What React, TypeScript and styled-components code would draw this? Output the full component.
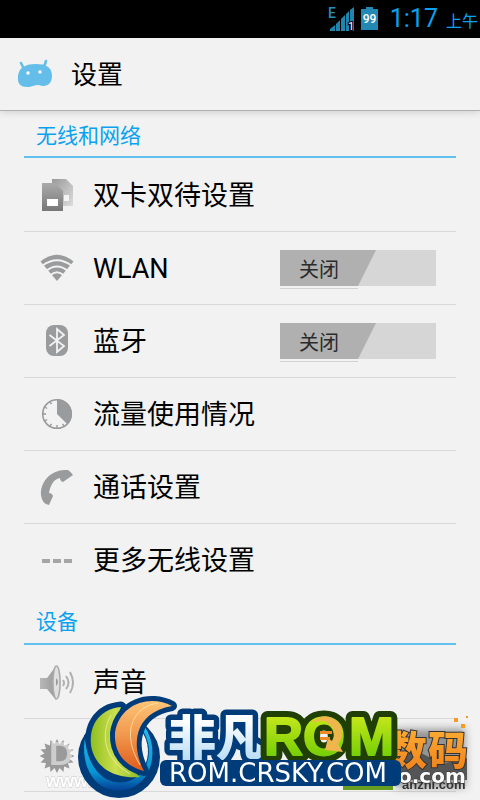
import React, { useState } from "react";
import styled, { createGlobalStyle } from "styled-components";

const Global = createGlobalStyle`
  * { box-sizing: border-box; }
  body { margin: 0; background: #f2f2f2; font-family: Roboto, "Noto Sans CJK SC", sans-serif; color: #000; }
`;

const Page = styled.div`
  min-height: 100vh;
  background: #f2f2f2;
`;

const StatusBar = styled.div`
  display: flex;
  align-items: center;
  justify-content: flex-end;
  height: 38px;
  padding: 0 2px 0 8px;
  gap: 5px;
  background: #000;
  color: #0aa2f0;
`;

const Clock = styled.time`
  display: flex;
  align-items: baseline;
  gap: 8px;
  margin-left: 7px;
  padding-top: 2px;
  font-size: 25px;
  font-weight: 400;
  line-height: 36px;
`;

const Meridiem = styled.span`
  font-size: 16px;
`;

const Header = styled.header`
  display: flex;
  align-items: center;
  gap: 17px;
  height: 73px;
  padding: 0 16px;
  border-bottom: 1px solid #b0b0b0;
  box-shadow: 0 1px 8px rgba(0, 0, 0, 0.16);
`;

const Title = styled.h1`
  margin: 0;
  padding-top: 2px;
  font-size: 26px;
  font-weight: 400;
  line-height: 36px;
`;

const Section = styled.section`
  margin: 0 24px;
`;

const SectionTitle = styled.h2<{ $first?: boolean }>`
  display: flex;
  align-items: center;
  height: ${(p) => (p.$first ? 47 : 49)}px;
  margin: 0;
  padding: 0 12px;
  border-bottom: 2px solid #62c1ec;
  color: #0aa2f0;
  font-size: 21px;
  font-weight: 400;
`;

const List = styled.ul`
  margin: 0;
  padding: 0;
  list-style: none;
`;

const Item = styled.li`
  display: flex;
  align-items: center;
  height: 73px;
  padding: 0 20px 0 16px;
  & + & { border-top: 1px solid #d8d8d8; }
  &[data-closed] { height: 74px; border-bottom: 1px solid #d8d8d8; }
`;

const Entry = styled.a`
  display: flex;
  flex: 1;
  align-items: center;
  gap: 19px;
  padding-top: 2px;
  color: inherit;
  font-size: 27px;
  line-height: 40px;
  text-decoration: none;
`;

const Switch = styled.button`
  display: flex;
  align-items: center;
  position: relative;
  width: 156px;
  height: 36px;
  padding: 4px 0 0 19px;
  border: 0;
  background: #d6d6d6;
  color: #2b2b2b;
  font: 20px/32px Roboto, "Noto Sans CJK SC", sans-serif;
  text-align: left;
`;

const Thumb = styled.svg`
  position: absolute;
  left: 0;
  top: 0;
`;

const SwitchText = styled.span`
  position: relative;
`;

const Watermark = styled.svg`
  position: fixed;
  right: 0;
  bottom: 0;
  pointer-events: none;
`;

type IconName = "sim" | "wifi" | "bluetooth" | "data" | "call" | "more" | "sound" | "display";

const drawings: Record<IconName, React.ReactNode> = {
  sim: (
    <>
      <defs>
        <linearGradient id="simFront" x2="0" y2="1"><stop stopColor="#aaa" /><stop offset="1" stopColor="#777" /></linearGradient>
        <linearGradient id="simBack" x2="1" y2="1"><stop stopColor="#999" /><stop offset="1" stopColor="#ddd" /></linearGradient>
      </defs>
      <path d="M12 1h14l7 7v20H12z" fill="url(#simBack)" />
      <path d="M24 17h5v6h-5z" fill="#f4f4f4" />
      <path d="M2 5h13l8 8v20H2z" fill="url(#simFront)" />
      <path d="M7 21h11v7H7z" fill="#fff" />
    </>
  ),
  wifi: (
    <>
      <path d="M0.500 10.500Q17-3 33.500 10.500L17 30z" fill="#999b9d" />
      <g fill="none" stroke="#f2f2f2" strokeWidth="1.800">
        <path d="M2 15Q17 3.500 32 15" />
        <path d="M6 20Q17 11 28 20" />
        <path d="M10 24.500Q17 18 24 24.500" />
      </g>
    </>
  ),
  bluetooth: (
    <>
      <rect x="6" y="1" width="22" height="31" rx="8" fill="#999b9d" />
      <path d="M9.5 11L24 22L17 28V5l7 6L9.5 22" fill="none" stroke="#f2f2f2" strokeWidth="1.8" />
    </>
  ),
  data: (
    <>
      <circle cx="17" cy="17" r="14.3" fill="none" stroke="#999b9d" strokeWidth="1.6" />
      <path d="M17 17V2a15 15 0 0 1 10.6 25.6z" fill="#999b9d" />
      <path d="M17 32v-4M2 17h4M4.1 9.5l3 2M9.5 4.1l2 3M4.1 24.5l3-2M9.5 29.9l2-3M24.5 29.9l-2-3" stroke="#999b9d" strokeWidth="1.4" />
    </>
  ),
  call: (
    <path
      d="M1 25C0 15 8-1 28 0q3 2 5 5L23 12q-3-1-3-4C13 9 10 17 9 23q3 0 4 3L9 35Q2 34 1 25z"
      fill="#999b9d"
    />
  ),
  more: <path d="M2 16h8v4H2zm11 0h8v4h-8zm11 0h8v4h-8z" fill="#a3a5a7" />,
  sound: (
    <>
      <defs>
        <linearGradient id="cone" x2="1" y2="0"><stop stopColor="#b8b8b8" /><stop offset="1" stopColor="#999" /></linearGradient>
      </defs>
      <path d="M0 13h7L16 1v34L7 24H0z" fill="url(#cone)" />
      <ellipse cx="16.5" cy="17.5" rx="3.6" ry="16.5" fill="#e0e0e0" stroke="#aaa" strokeWidth="1.6" />
      <path d="M16 13q4 4 0 8z" fill="#999" />
      <path d="M23 15q2 3 0 6M26 11q5 7 0 13M30 7q6 11 0 21" fill="none" stroke="#b0b0b0" strokeWidth="2" />
    </>
  ),
  display: (
    <path
      d="M17 1l2.5 5 4-4 .6 5.600 5.400-2-1.500 5.500 5.500.4-4 4 5 2.500-5 2.500 4 4-5.500.4 1.500 5.500-5.400-2-.6 5.600-4-4-2.500 5-2.500-5-4 4-.6-5.600-5.400 2 1.500-5.500-5.500-.4 4-4-5-2.500 5-2.500-4-4 5.500-.4L4.500 5.600l5.400 2 .6-5.600 4 4z"
      fill="#9a9a9a"
    />
  ),
};

const Icon = ({ name }: { name: IconName }) => (
  <svg width="34" height="36" viewBox="0 0 34 36" aria-hidden="true">{drawings[name]}</svg>
);

function Toggle({ labelId }: { labelId: string }) {
  const [on, setOn] = useState(false);
  return (
    <Switch type="button" role="switch" aria-checked={on} aria-labelledby={labelId} onClick={() => setOn(!on)}>
      <Thumb width="156" height="40" aria-hidden="true">
        <path d="M0 0h96L78 36H0z" fill={on ? "#33b5e5" : "#b0b0b0"} />
        <path d="M0 38h78v1H0z" fill="#d2d2d2" />
      </Thumb>
      <SwitchText>{on ? "开启" : "关闭"}</SwitchText>
    </Switch>
  );
}

interface RowData { icon: IconName; label: string; toggle?: boolean; closed?: boolean }

const network: RowData[] = [
  { icon: "sim", label: "双卡双待设置" },
  { icon: "wifi", label: "WLAN", toggle: true },
  { icon: "bluetooth", label: "蓝牙", toggle: true },
  { icon: "data", label: "流量使用情况" },
  { icon: "call", label: "通话设置" },
  { icon: "more", label: "更多无线设置" },
];

const device: RowData[] = [
  { icon: "sound", label: "声音" },
  { icon: "display", label: "显示", closed: true },
];

const Rows = ({ rows }: { rows: RowData[] }) => (
  <List>
    {rows.map((r) => (
      <Item key={r.icon} data-closed={r.closed || undefined}>
        <Entry href={`#${r.icon}`}>
          <Icon name={r.icon} />
          <span id={`label-${r.icon}`}>{r.label}</span>
        </Entry>
        {r.toggle && <Toggle labelId={`label-${r.icon}`} />}
      </Item>
    ))}
  </List>
);

const SignalIcon = () => (
  <svg width="28" height="26" viewBox="0 0 28 26" aria-label="E">
    <path d="M2 25v-2l5-4v6zM8 25v-7l4-4v11zM13 25V13l4-4v16zM18 25V8l3-3v20zM22 25V4l4-3v24z" fill="#2184ad" />
    <text x="0" y="12" fontFamily="Roboto" fontSize="14" fontWeight="500" fill="#2b8fb8">E</text>
    <text x="20" y="24" fontFamily="Roboto" fontSize="11" fill="#fff" stroke="#000" strokeWidth="2" paintOrder="stroke">1</text>
  </svg>
);

const BatteryIcon = () => (
  <svg width="17" height="24" viewBox="0 0 17 24" aria-label="99">
    <path d="M5 0h7v2h5v21H0V2h5z" fill="#2488b4" />
    <text x="8.500" y="16" textAnchor="middle" fontFamily="Roboto" fontSize="12" fontWeight="500" fill="#fff">99</text>
  </svg>
);

const RobotIcon = () => (
  <svg width="38" height="32" viewBox="0 0 38 32" aria-hidden="true">
    <path d="M5 5l3 6M30 3l-2 6" stroke="#64bee9" strokeWidth="2.600" strokeLinecap="round" />
    <path d="M2 18C3 9 10 6 20 6s16 3 16 12c0 8-6 12-13 9-6 0-6 2-12 2C5 29 1 26 2 18z" fill="#64bee9" />
    <circle cx="12" cy="15" r="1.700" fill="#fff" /><circle cx="24" cy="14" r="1.700" fill="#fff" />
  </svg>
);

const Brand = () => (
  <Watermark width="480" height="110" viewBox="0 690 480 110">
    <defs>
      <linearGradient id="lime" x2="0" y2="1"><stop stopColor="#d9ee20" /><stop offset="1" stopColor="#62c800" /></linearGradient>
      <linearGradient id="leaf" x2="1" y2="0"><stop stopColor="#8fbf20" /><stop offset=".5" stopColor="#cbe04f" /><stop offset="1" stopColor="#8aba2a" /></linearGradient>
      <linearGradient id="orange" x2="0" y2="1"><stop stopColor="#ffc477" /><stop offset=".5" stopColor="#f0964c" /><stop offset="1" stopColor="#df5c1c" /></linearGradient>
      <linearGradient id="ring" x2="0" y2="1"><stop stopColor="#27b9ed" /><stop offset=".7" stopColor="#0797d5" /><stop offset="1" stopColor="#053c91" /></linearGradient>
      <linearGradient id="ice" x2="0" y2="1"><stop offset=".3" stopColor="#fff" /><stop offset="1" stopColor="#a9d6f4" /></linearGradient>
      <linearGradient id="amber" x2="0" y2="1"><stop stopColor="#ffb43a" /><stop offset="1" stopColor="#ee7d16" /></linearGradient>
      <filter id="soft" x="-20%" y="-40%" width="140%" height="180%"><feGaussianBlur stdDeviation="4" /></filter>
    </defs>

    <g fontFamily="Liberation Sans" fontWeight="700" fill="#fff">
      <text x="49" y="765" fontSize="34" opacity=".5">D</text>
      <text x="46" y="787" fontSize="18" stroke="#ccc" strokeWidth="1" paintOrder="stroke">www.</text>
    </g>

    <path d="M395 729h70v58h-70z" fill="#555" opacity=".6" filter="url(#soft)" />
    <path d="M395 762l20-12 28 14 24-6v22h-72z" fill="#555" />
    <path d="M343 779h50v11h-50z" fill="#679d20" />
    <g fontFamily="Noto Sans CJK SC" fontWeight="900" fontSize="40" stroke="#333" strokeWidth="2" paintOrder="stroke" fill="url(#amber)">
      <text x="387" y="765">数</text>
      <text x="428" y="765">码</text>
    </g>
    <path d="M454 718h4v4h-4zM461 724h4v4h-4zM466 716h2v2h-2z" fill="#f59a25" />
    <text x="402" y="789" fontFamily="Liberation Sans" fontSize="13" fontWeight="700" fill="#333">anzhi.com</text>
    <text x="398" y="783" fontFamily="DejaVu Sans" fontSize="20" fontWeight="700" fill="#fff" stroke="#333" strokeWidth="1" paintOrder="stroke">o.com</text>

    <circle cx="119" cy="757" r="41" fill="#003c7a" />
    <path d="M137 727Q153 741 148 760L143 767Q133 745 137 727z" fill="#f2f2f2" />
    <path d="M121 707C98 709 87 728 92 750c6 20 25 29 48 27C118 757 111 732 121 707z" fill="#003c7a" stroke="#003c7a" strokeWidth="11" strokeLinejoin="round" />
    <path d="M85 735C78 768 97 793 120 791 149 790 163 754 145 726l-3 4C158 756 142 783 119 782 99 781 87 762 85 735z" fill="url(#ring)" stroke="#003c7a" strokeWidth="1" />
    <path d="M121 707C98 709 87 728 92 750c6 20 25 29 48 27C118 757 111 732 121 707z" fill="url(#leaf)" />
    <path d="M172 706C150 694 119 704 115 733c-1 20 10 33 29 38C131 746 133 713 172 706z" fill="url(#orange)" stroke="#003c7a" strokeWidth="10" strokeLinejoin="round" paintOrder="stroke" />
    <path d="M158 703C132 707 121 733 140 765M111 715C99 737 106 760 130 774" fill="none" stroke="#fff1b5" strokeWidth="1" opacity=".7" />

    <text x="168" y="755" fontFamily="Noto Sans CJK SC" fontSize="48" fontWeight="900" fill="url(#ice)" stroke="#003c7a" strokeWidth="11" strokeLinejoin="round" paintOrder="stroke">非凡</text>

    <g fontFamily="Liberation Sans" fontWeight="700" fontSize="54" strokeLinejoin="round">
      <g stroke="#203f05" fill="#203f05" strokeWidth="14">
        <text x="264" y="755">R</text><text x="303" y="755">O</text><text x="349" y="755">M</text>
      </g>
      <g fill="url(#lime)" stroke="url(#lime)" strokeWidth="2">
        <text x="264" y="755">R</text><text x="303" y="755">O</text><text x="349" y="755">M</text>
      </g>
    </g>
    <path d="M312 722q14-12 27 1 7 12-1 21l5 8-18-2 3-12 4 3q5-9-1-15-7-8-15-4z" fill="#efb64d" />
    <path d="M320 731h12v3h-12zm0 6h10v3h-10z" fill="#f08a24" />

    <rect x="160" y="760" width="241" height="26" rx="6" fill="#003c7a" />
    <text x="169" y="782" fontFamily="DejaVu Sans" fontSize="26" fill="#fff">ROM.CRSKY.COM</text>
  </Watermark>
);

export default function App() {
  return (
    <Page>
      <Global />
      <StatusBar>
        <SignalIcon />
        <BatteryIcon />
        <Clock>1:17<Meridiem>上午</Meridiem></Clock>
      </StatusBar>
      <Header>
        <RobotIcon />
        <Title>设置</Title>
      </Header>
      <main>
        <Section>
          <SectionTitle $first>无线和网络</SectionTitle>
          <Rows rows={network} />
        </Section>
        <Section>
          <SectionTitle>设备</SectionTitle>
          <Rows rows={device} />
        </Section>
      </main>
      <Brand />
    </Page>
  );
}
